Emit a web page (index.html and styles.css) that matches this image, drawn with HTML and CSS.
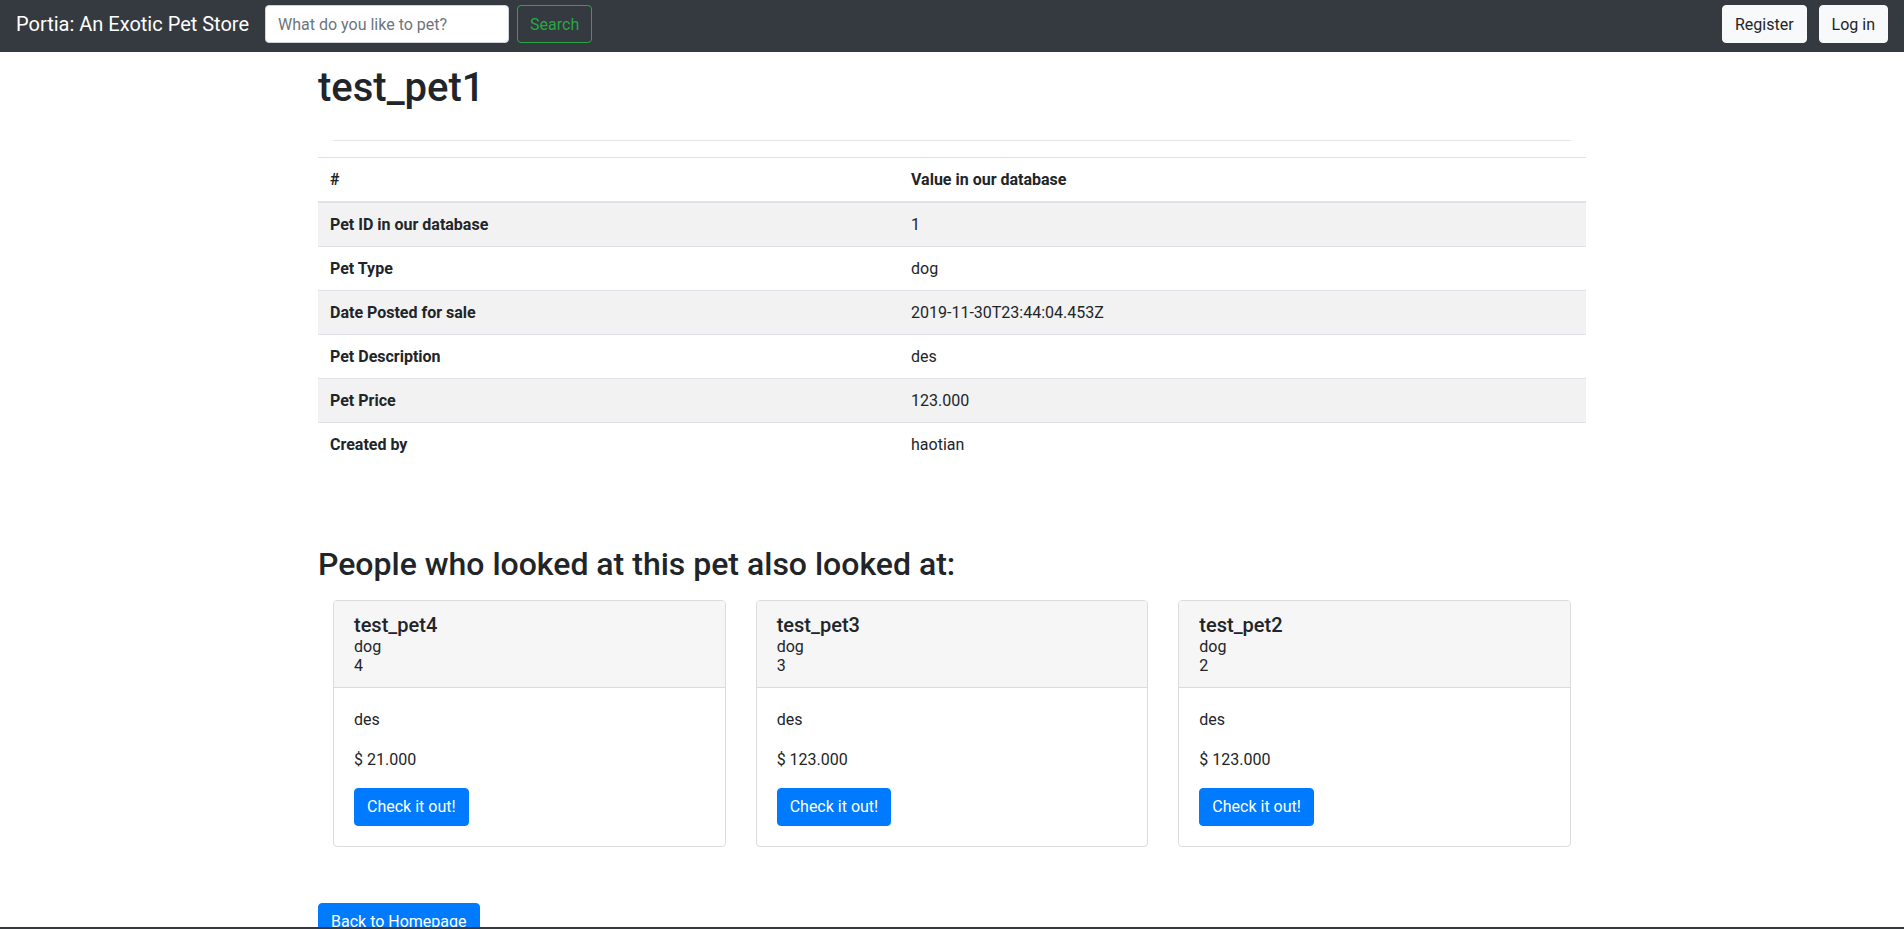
FILE: index.html
```html
<!DOCTYPE html>
<html>
<head>
<meta charset="utf-8">
<link rel="stylesheet" href="styles.css">
</head>
<body>
<nav class="navbar">
  <div class="nav-left">
    <a class="brand">Portia: An Exotic Pet Store</a>
    <form class="search">
      <input class="search-input" type="text" placeholder="What do you like to pet?">
      <button class="btn-search" type="button">Search</button>
    </form>
  </div>
  <div class="nav-right">
    <button class="btn-light" type="button">Register</button>
    <button class="btn-light" type="button">Log in</button>
  </div>
</nav>
<main class="container">
  <h1 class="title">test_pet1</h1>
  <hr class="divider">
  <table class="table">
    <thead>
      <tr><th>#</th><th>Value in our database</th></tr>
    </thead>
    <tbody>
      <tr><th>Pet ID in our database</th><td>1</td></tr>
      <tr><th>Pet Type</th><td>dog</td></tr>
      <tr><th>Date Posted for sale</th><td>2019-11-30T23:44:04.453Z</td></tr>
      <tr><th>Pet Description</th><td>des</td></tr>
      <tr><th>Pet Price</th><td>123.000</td></tr>
      <tr><th>Created by</th><td>haotian</td></tr>
    </tbody>
  </table>
  <h2 class="subtitle">People who looked at this pet also looked at:</h2>
  <div class="cards">
    <div class="card">
      <div class="card-header">
        <h5 class="card-title">test_pet4</h5>
        <div>dog</div>
        <div>4</div>
      </div>
      <div class="card-body">
        <p>des</p>
        <p>$ 21.000</p>
        <button class="btn-primary" type="button">Check it out!</button>
      </div>
    </div>
    <div class="card">
      <div class="card-header">
        <h5 class="card-title">test_pet3</h5>
        <div>dog</div>
        <div>3</div>
      </div>
      <div class="card-body">
        <p>des</p>
        <p>$ 123.000</p>
        <button class="btn-primary" type="button">Check it out!</button>
      </div>
    </div>
    <div class="card">
      <div class="card-header">
        <h5 class="card-title">test_pet2</h5>
        <div>dog</div>
        <div>2</div>
      </div>
      <div class="card-body">
        <p>des</p>
        <p>$ 123.000</p>
        <button class="btn-primary" type="button">Check it out!</button>
      </div>
    </div>
  </div>
  <div class="back">
    <button class="btn-primary btn-back" type="button">Back to Homepage</button>
  </div>
</main>
<div class="bottom-bar"></div>
</body>
</html>
```
FILE: styles.css
```css
* { box-sizing: border-box; }
html, body { margin: 0; padding: 0; }
body {
  font-family: Roboto, "Liberation Sans", sans-serif;
  font-size: 16px;
  line-height: 1.5;
  color: #212529;
  background: #fff;
  overflow: hidden;
}
.navbar {
  height: 52px;
  background: #343a40;
  display: flex;
  align-items: flex-start;
  justify-content: space-between;
  padding: 5px 16px 0 16px;
}
.nav-left { display: flex; align-items: center; }
.brand {
  color: #fff;
  font-size: 20px;
  line-height: 30px;
  margin-right: 16px;
  height: 38px;
  display: flex;
  align-items: center;
}
.search { display: flex; align-items: center; margin: 0; }
.search-input {
  width: 244px;
  height: 38px;
  padding: 6px 12px;
  font-family: inherit;
  font-size: 16px;
  color: #495057;
  border: 1px solid #ced4da;
  border-radius: 4px;
  margin-right: 8px;
  outline: none;
}
.search-input::placeholder { color: #6c757d; }
.btn-search {
  height: 38px;
  padding: 6px 12px;
  font-family: inherit;
  font-size: 16px;
  color: #28a745;
  background: transparent;
  border: 1px solid #28a745;
  border-radius: 4px;
}
.nav-right { display: flex; gap: 12px; }
.btn-light {
  height: 38px;
  padding: 6px 12px;
  font-family: inherit;
  font-size: 16px;
  color: #212529;
  background: #f8f9fa;
  border: 1px solid #f8f9fa;
  border-radius: 4px;
}
.container {
  width: 1268px;
  margin: 0 auto;
}
.title {
  font-size: 40px;
  font-weight: 500;
  line-height: 48px;
  margin: 0;
  padding-top: 12px;
}
.divider {
  margin: 28px 15px 16px 15px;
  border: 0;
  border-top: 1px solid #e5e5e5;
  height: 0;
}
.table {
  width: 100%;
  border-collapse: collapse;
  font-size: 16px;
}
.table th, .table td {
  text-align: left;
  padding: 10px 12px 9px 12px;
  line-height: 24px;
  border-top: 1px solid #dee2e6;
  vertical-align: top;
}
.table th { font-weight: 700; }
.table td { font-weight: 400; }
.table thead th { border-bottom: 2px solid #dee2e6; }
.table th:first-child { width: 581px; }
.table tbody tr:nth-child(odd) { background: #f2f2f2; }
.subtitle {
  font-size: 32px;
  font-weight: 500;
  line-height: 38px;
  margin: 79px 0 17px 0;
}
.cards {
  display: grid;
  grid-template-columns: repeat(3, 1fr);
  column-gap: 30px;
  padding: 0 15px;
}
.card {
  border: 1px solid #dcdcdc;
  border-radius: 4px;
  overflow: hidden;
}
.card-header {
  background: #f6f6f6;
  border-bottom: 1px solid #dcdcdc;
  padding: 12px 20px 12px 20px;
  font-size: 16px;
  line-height: 19px;
}
.card-title {
  font-size: 20px;
  font-weight: 500;
  line-height: 24px;
  margin: 0;
}
.card-body {
  padding: 20px 20px 20px 20px;
  font-size: 16px;
}
.card-body p { margin: 0 0 16px 0; line-height: 24px; }
.btn-primary {
  font-family: inherit;
  font-size: 16px;
  line-height: 24px;
  padding: 6px 12px;
  color: #fff;
  background: #007bff;
  border: 1px solid #007bff;
  border-radius: 4px;
}
.back { margin-top: 56px; }
.bottom-bar {
  position: fixed;
  left: 0;
  right: 0;
  bottom: 0;
  height: 2px;
  background: #343a40;
}
```
